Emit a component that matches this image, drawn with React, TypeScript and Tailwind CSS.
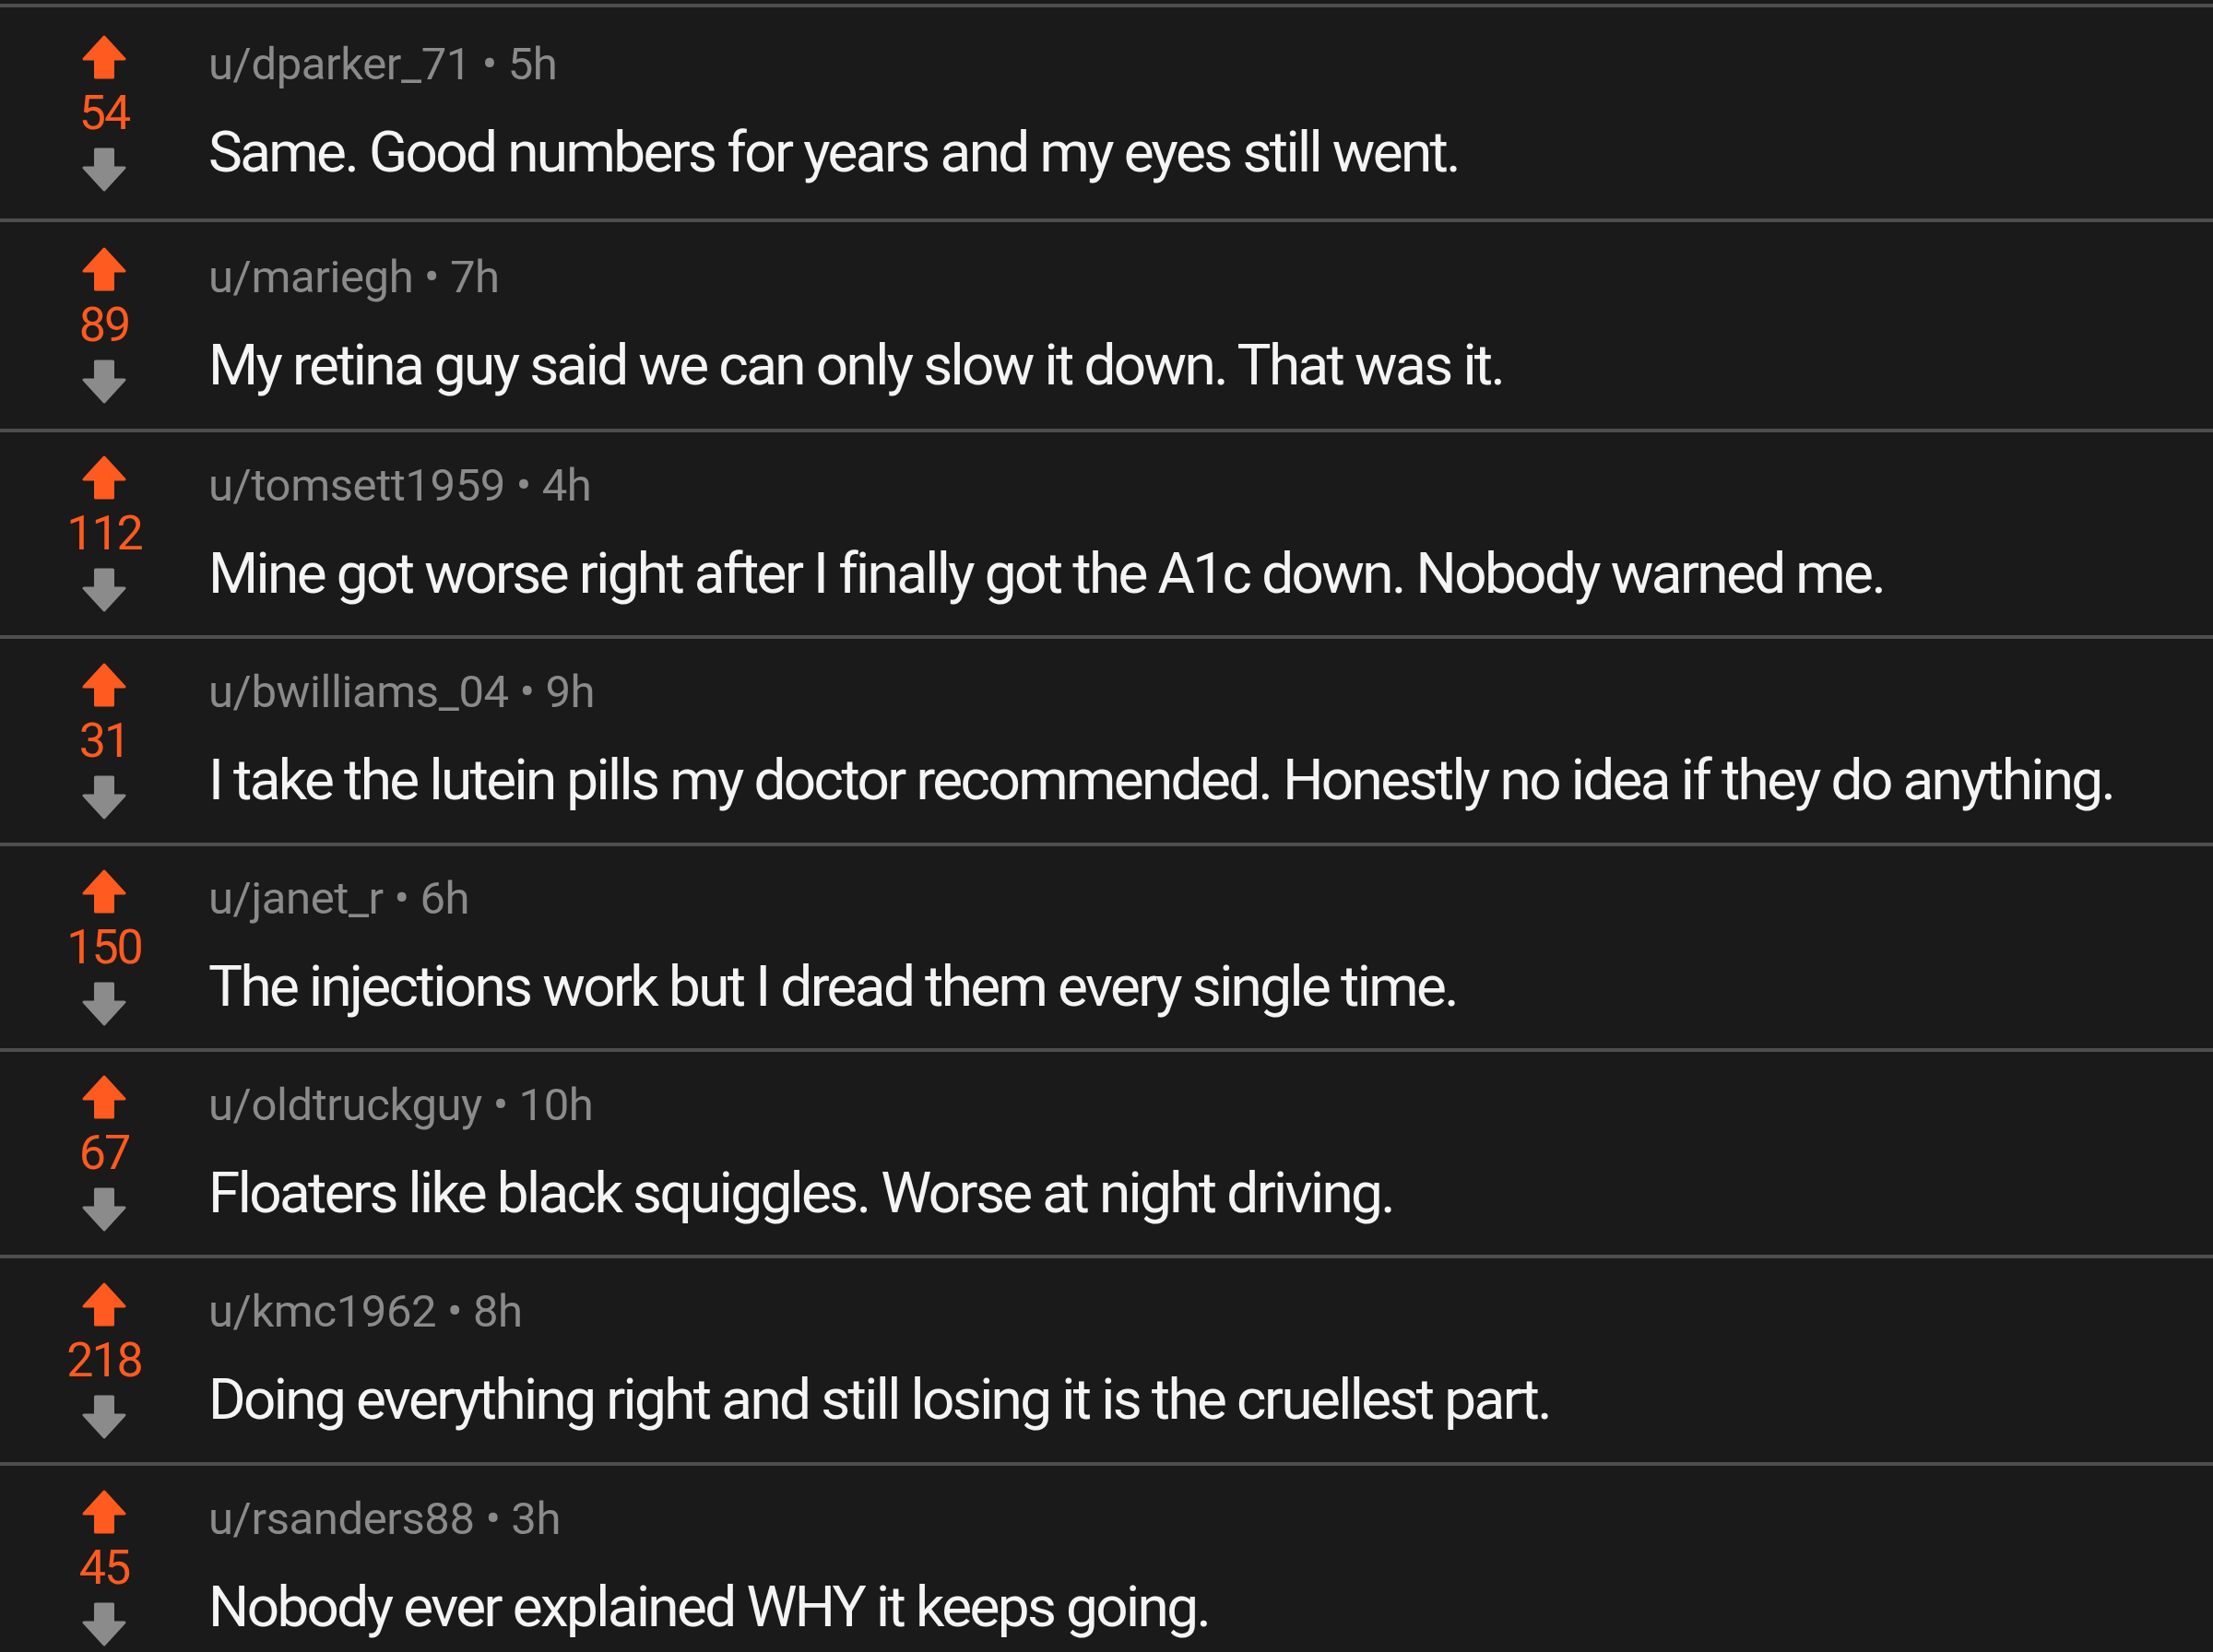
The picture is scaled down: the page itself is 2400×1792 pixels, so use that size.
const comments = [
  { user: "dparker_71", age: "5h", score: 54, body: "Same. Good numbers for years and my eyes still went.", h: 233 },
  { user: "mariegh", age: "7h", score: 89, body: "My retina guy said we can only slow it down. That was it.", h: 228 },
  { user: "tomsett1959", age: "4h", score: 112, body: "Mine got worse right after I finally got the A1c down. Nobody warned me.", h: 224 },
  { user: "bwilliams_04", age: "9h", score: 31, body: "I take the lutein pills my doctor recommended. Honestly no idea if they do anything.", h: 225 },
  { user: "janet_r", age: "6h", score: 150, body: "The injections work but I dread them every single time.", h: 223 },
  { user: "oldtruckguy", age: "10h", score: 67, body: "Floaters like black squiggles. Worse at night driving.", h: 224 },
  { user: "kmc1962", age: "8h", score: 218, body: "Doing everything right and still losing it is the cruellest part.", h: 225 },
  { user: "rsanders88", age: "3h", score: 45, body: "Nobody ever explained WHY it keeps going.", h: 225 },
];

const Arrow = ({ down = false }: { down?: boolean }) => (
  <svg
    width="48"
    height="48"
    viewBox="0 0 48 48"
    className={down ? "rotate-180 text-[#8b8b8b]" : "text-[#ff5a1f]"}
  >
    <path
      d="M24 2 L46 26 L33.5 26 L33.5 46 L14.5 46 L14.5 26 L2 26 Z"
      fill="currentColor"
      stroke="currentColor"
      strokeWidth="3"
      strokeLinejoin="round"
    />
  </svg>
);

const Comment = ({ user, age, score, body, h }: (typeof comments)[number]) => (
  <div
    className="flex items-center border-t-4 border-[#4e4e4e]"
    style={{ height: h }}
  >
    <div className="flex w-[226px] shrink-0 flex-col items-center">
      <Arrow />
      <div className="h-[74px] text-[52px] leading-[74px] tracking-[-2px] text-[#ff5a1f]">{score}</div>
      <Arrow down />
    </div>
    <div className="flex flex-col gap-[25px] whitespace-nowrap">
      <div className="h-[60px] text-[49px] leading-[60px] tracking-[-0.4px] text-[#8a8a8a]">
        u/{user} • {age}
      </div>
      <div className="h-[80px] text-[62px] leading-[80px] tracking-[-2.6px] text-[#f4f4f4]">
        {body}
      </div>
    </div>
  </div>
);

export default function App() {
  return (
    <div
      className="h-[1792px] w-[2400px] overflow-hidden bg-[#1a1a1a] pt-[4px]"
      style={{ fontFamily: "Roboto, 'Liberation Sans', sans-serif" }}
    >
      {comments.map((c) => (
        <Comment key={c.user} {...c} />
      ))}
    </div>
  );
}
